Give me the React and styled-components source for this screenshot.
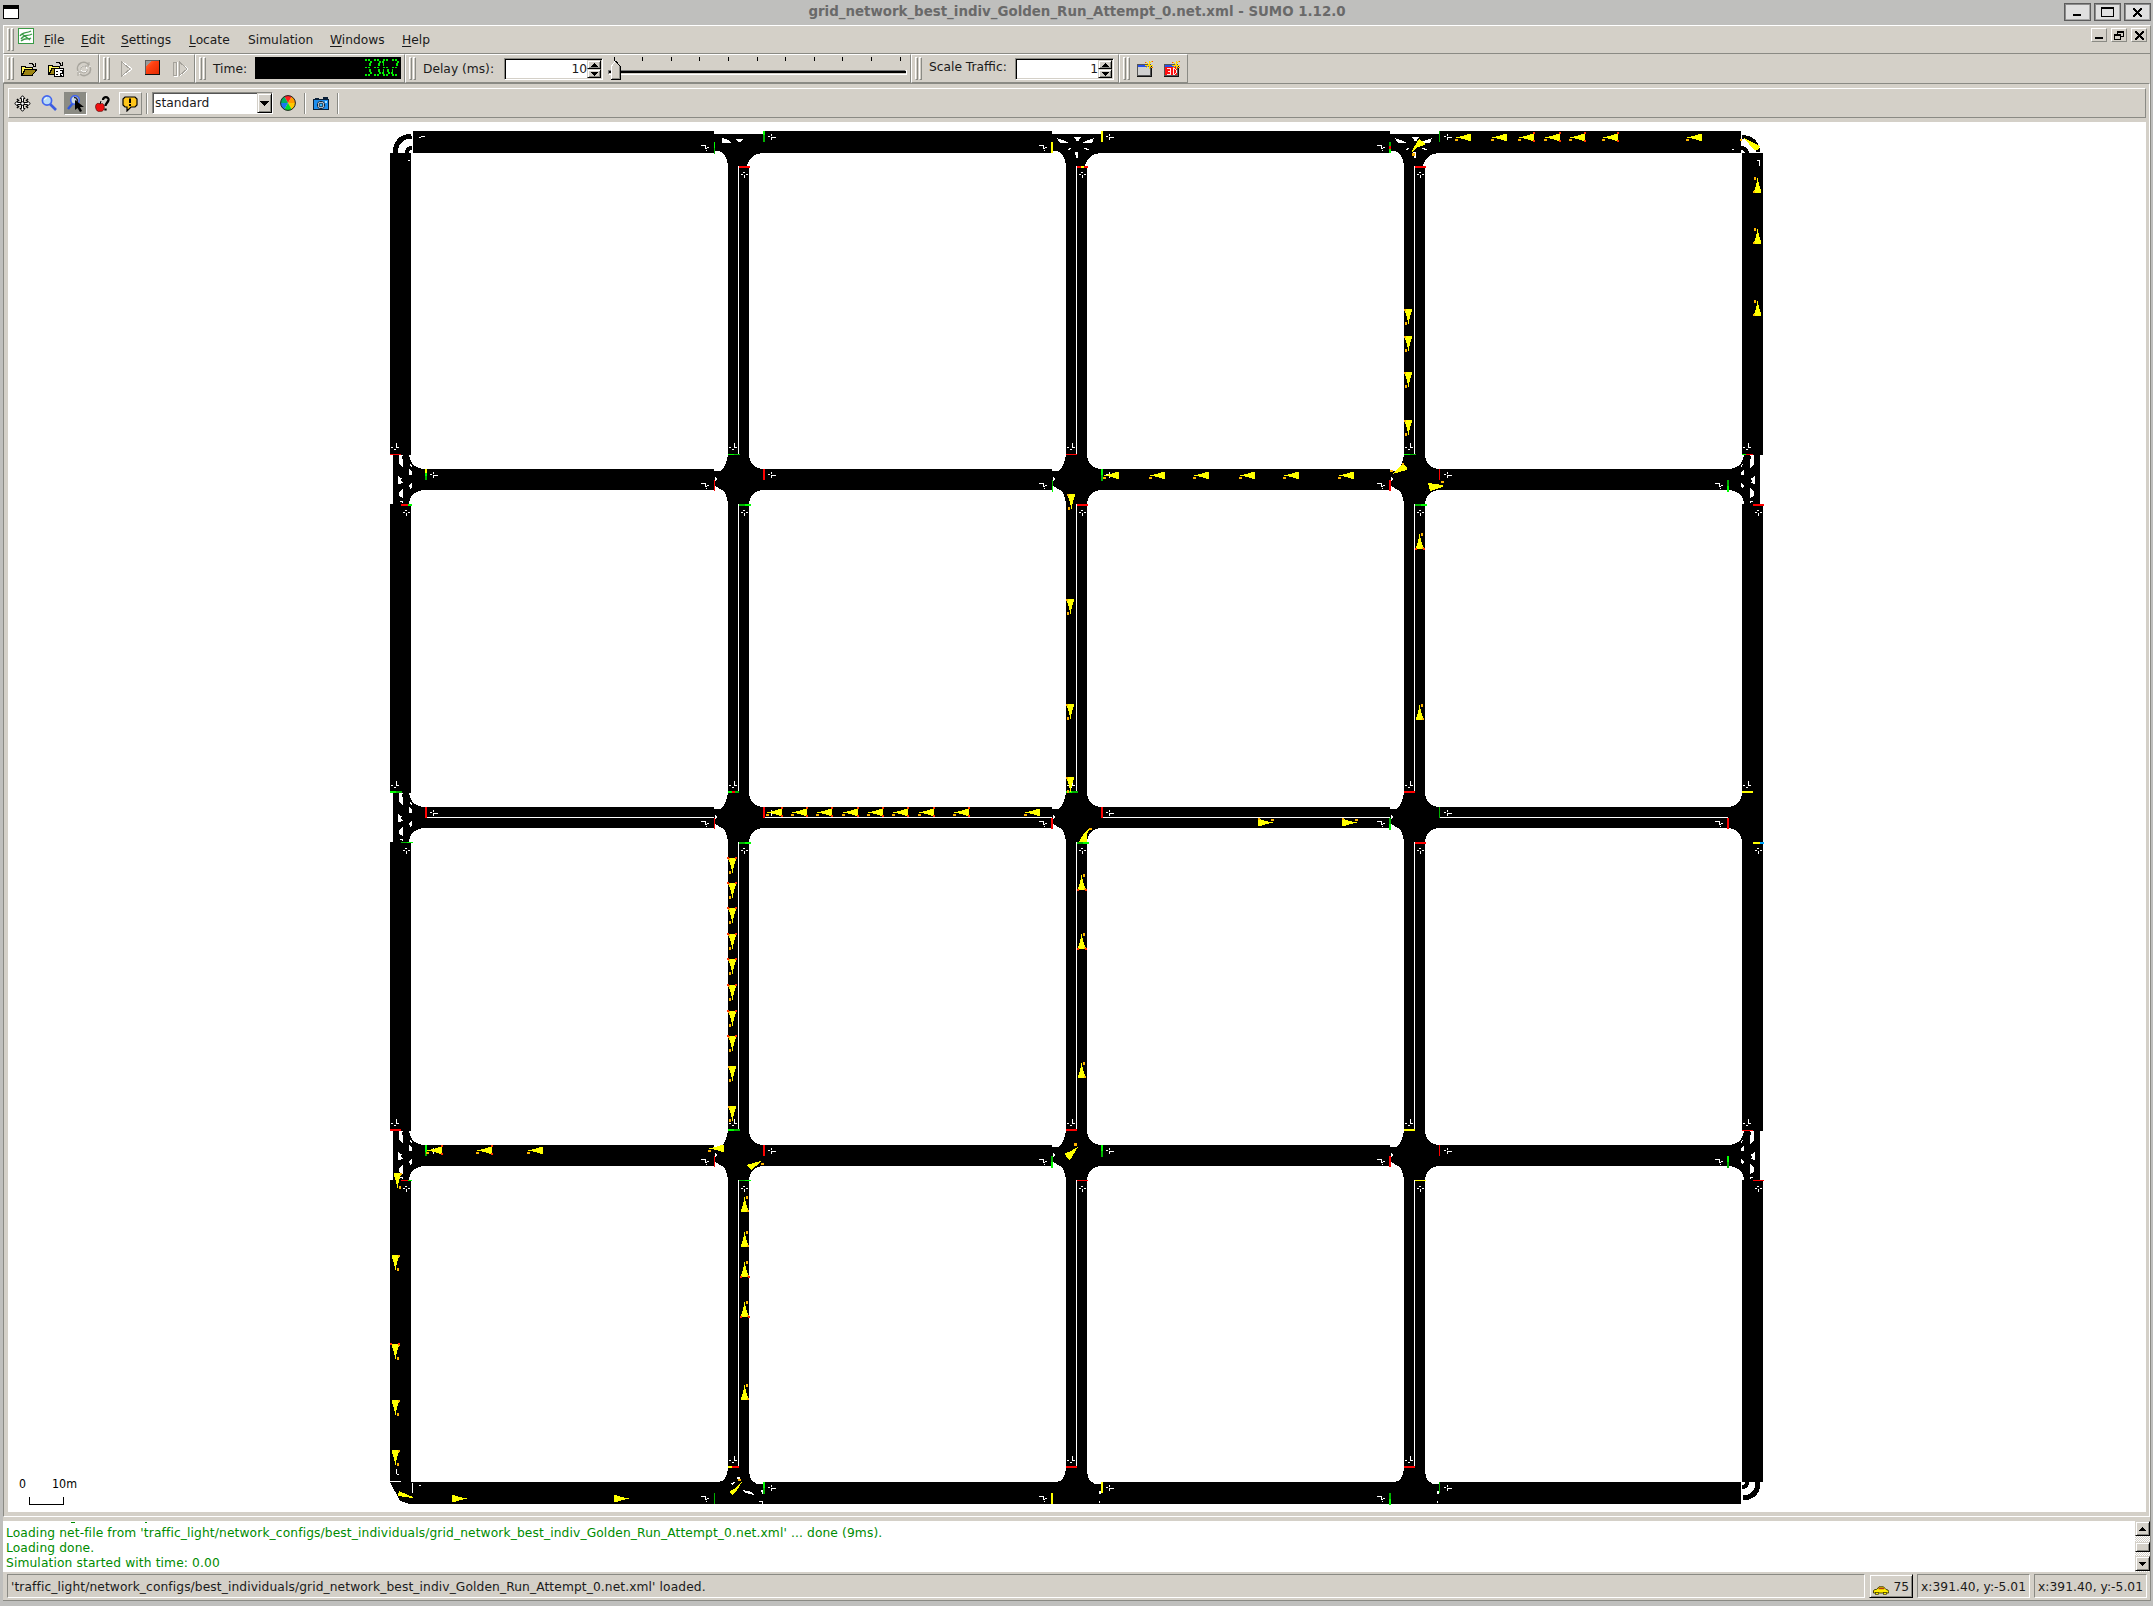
import React from "react";
import styled, { createGlobalStyle, css } from "styled-components";

const C = {
  face: "#d4d0c8",
  frame: "#bfbfbd",
  shadow: "#8a8a84",
  light: "#ffffff",
  ink: "#1a1a1a",
};

const Global = createGlobalStyle`
  html, body { margin: 0; padding: 0; background: ${C.frame}; }
  *, *::before, *::after { box-sizing: border-box; }
  body { font-family: "DejaVu Sans", sans-serif; font-size: 12.25px; color: ${C.ink}; overflow: hidden; }
`;

const raised = css`
  border: 1px solid;
  border-color: ${C.light} ${C.shadow} ${C.shadow} ${C.light};
`;
const hardRaised = css`
  border: 1px solid;
  border-color: ${C.face} #000 #000 ${C.face};
  box-shadow: inset 1px 1px 0 ${C.light}, inset -1px -1px 0 ${C.shadow};
`;
const sunken = css`
  border: 1px solid;
  border-color: ${C.shadow} ${C.light} ${C.light} ${C.shadow};
`;

const Screen = styled.div`
  width: 2153px;
  height: 1606px;
  display: flex;
  flex-direction: column;
  background: ${C.frame};
`;
const TitleBar = styled.header`
  height: 25px;
  padding: 3px 2px 0 3px;
  display: grid;
  grid-template-columns: 200px 1fr 200px;
  align-items: start;
`;
const Title = styled.h1`
  margin: 0;
  text-align: center;
  font-size: 13.38px;
  line-height: 17px;
  font-weight: bold;
  color: #696969;
  white-space: nowrap;
`;
const TitleButtons = styled.div`
  display: flex;
  gap: 3px;
  justify-content: flex-end;
`;
const TitleButton = styled.button`
  width: 27px;
  height: 18px;
  padding: 0;
  display: grid;
  place-items: center;
  background: #e0e0e0;
  border: 1px solid #5c5c5c;
  box-shadow: inset 1px 1px 0 #8b8b8b, inset -1px -1px 0 #a8a8a8;
`;
const WindowBody = styled.main`
  margin: 0 2px 0 3px;
  height: 1576px;
  display: flex;
  flex-direction: column;
  background: ${C.face};
  border-top: 1px solid ${C.light};
  border-bottom: 1px solid ${C.shadow};
  border-right: 1px solid ${C.shadow};
`;
const MenuBar = styled.nav`
  height: 28px;
  padding: 2px 3px 0 3px;
  display: flex;
  align-items: flex-start;
  border-bottom: 1px solid ${C.shadow};
  border-left: 1px solid ${C.light};
`;
const GripBox = styled.div`
  display: flex;
  gap: 1px;
  height: 23px;
  flex: none;
`;
const GripBar = styled.i`
  width: 3px;
  ${raised}
`;
const Grip = () => (
  <GripBox>
    <GripBar />
    <GripBar />
  </GripBox>
);
const MenuIcon = styled.div`
  width: 16px;
  height: 16px;
  margin: 0 10px 0 4px;
`;
const MenuItem = styled.div`
  width: ${(p) => p.$w}px;
  height: 20px;
  line-height: 24px;
  white-space: nowrap;
`;
const Key = styled.span`
  text-decoration: underline;
  text-underline-offset: 2px;
`;
const MdiButtons = styled.div`
  margin-left: auto;
  display: flex;
  gap: 4px;
`;
const MdiButton = styled.button`
  width: 16px;
  height: 14px;
  padding: 0;
  display: grid;
  place-items: center;
  background: ${C.face};
  ${raised}
`;
const ToolRow = styled.div`
  height: 29px;
  display: flex;
`;
const ToolGroup = styled.section`
  width: ${(p) => p.$w}px;
  padding: 2px 0 0 3px;
  display: flex;
  align-items: flex-start;
  ${raised}
`;
const ToolIcon = styled.div`
  width: ${(p) => p.$w || 16}px;
  height: 16px;
  margin-top: ${(p) => (p.$y === undefined ? 4 : p.$y)}px;
  margin-left: ${(p) => p.$l}px;
  flex: none;
`;
const ToolLabel = styled.label`
  width: ${(p) => p.$w}px;
  flex: none;
  margin-left: 7px;
  line-height: ${(p) => p.$lh || 24}px;
  white-space: nowrap;
`;
const Lcd = styled.div`
  width: 146px;
  height: 22px;
  padding: 2px 1px 0 0;
  display: flex;
  justify-content: flex-end;
  background: #000;
`;
const SpinField = styled.div`
  width: ${(p) => p.$w}px;
  flex: none;
  height: 22px;
  margin-top: 1px;
  display: flex;
  background: #fff;
  border: 1px solid;
  border-color: ${C.shadow} ${C.light} ${C.light} ${C.shadow};
  box-shadow: inset 1px 1px 0 #000, inset -1px -1px 0 ${C.face};
`;
const SpinValue = styled.span`
  flex: 1;
  text-align: right;
  line-height: 21px;
`;
const SpinButtons = styled.div`
  width: 15px;
  padding: 1px 1px 1px 0;
  display: grid;
  grid-template-rows: 1fr 1fr;
`;
const ArrowButton = styled.button`
  padding: 0;
  min-width: 0;
  min-height: 0;
  width: 100%;
  height: 100%;
  display: grid;
  place-items: center;
  background: ${C.face};
  ${hardRaised}
`;
const SliderBox = styled.div`
  width: 299px;
  height: 25px;
  margin-left: 5px;
  flex: none;
`;
const Mdi = styled.section`
  height: 1434px;
  padding: 4px 3px 0 4px;
  border-left: 1px solid ${C.shadow};
  border-right: 1px solid ${C.light};
  border-bottom: 1px solid ${C.light};
  border-top: 1px solid ${C.shadow};
`;
const ViewBar = styled.div`
  height: 30px;
  padding: 3px 0 0 5px;
  display: flex;
  align-items: flex-start;
  ${raised}
`;
const ViewButton = styled.div`
  width: 23px;
  height: 23px;
  margin-left: ${(p) => p.$l}px;
  display: grid;
  place-items: center;
  background: ${(p) => (p.$on ? "#8b8b83" : C.face)};
  ${(p) => (p.$on ? sunken : raised)}
`;
const Divider = styled.i`
  width: 2px;
  height: 21px;
  margin-top: 1px;
  margin-left: ${(p) => p.$l}px;
  background: linear-gradient(90deg, ${C.shadow} 50%, ${C.light} 50%);
`;
const Combo = styled.div`
  width: 121px;
  height: 22px;
  margin-left: 4px;
  display: flex;
  background: #fff;
  border: 1px solid;
  border-color: ${C.shadow} ${C.light} ${C.light} ${C.shadow};
  box-shadow: inset 1px 1px 0 #555;
`;
const ComboText = styled.span`
  flex: 1;
  padding-left: 2px;
  line-height: 21px;
`;
const ComboArrow = styled.div`
  width: 15px;
  display: grid;
`;
const Canvas = styled.div`
  height: 1390px;
  margin-top: 4px;
  background: #fff;
`;
const LogRow = styled.section`
  height: 51px;
  margin-top: 4px;
  display: flex;
  background: #fff;
`;
const LogText = styled.div`
  flex: 1;
  padding: 0 0 0 3px;
  color: #008b00;
  letter-spacing: 0.12px;
`;
const LogClip = styled.div`
  height: 3px;
`;
const LogLine = styled.div`
  height: 15px;
  line-height: 18px;
  white-space: nowrap;
`;
const ScrollBar = styled.div`
  width: 15px;
  height: 51px;
  display: grid;
  grid-template-rows: 15px 6px 10px 4px 15px;
  background: repeating-conic-gradient(#fff 0 25%, ${C.face} 0 50%) 0 0 / 2px 2px;
`;
const ScrollThumb = styled.i`
  background: ${C.face};
  ${hardRaised}
`;
const StatusBar = styled.footer`
  margin-top: 2px;
  padding: 0 3px 0 4px;
  display: flex;
  gap: 4px;
`;
const StatusCell = styled.div`
  width: ${(p) => p.$w}px;
  height: 24px;
  padding: 0 3px;
  line-height: 24px;
  letter-spacing: ${(p) => p.$ls || 0.05}px;
  white-space: nowrap;
  ${sunken}
`;
const VehicleButton = styled.div`
  width: 44px;
  height: 24px;
  padding: 0 3px;
  display: flex;
  justify-content: space-between;
  line-height: 24px;
  ${hardRaised}
`;
const CarSlot = styled.span`
  padding-top: 11px;
  display: flex;
`;

/* ---------- small drawings ---------- */

const Block = styled.svg`
  display: block;
`;
const TopIcon = styled.div`
  padding-top: 2px;
`;
const Svg = ({ w = 16, h = 16, children, ...rest }) => (
  <Block width={w} height={h} viewBox={`0 0 ${w} ${h}`} shapeRendering="crispEdges" {...rest}>
    {children}
  </Block>
);
const Tri = ({ down, s = 7 }) => (
  <Svg w={s} h={4}>
    <path d={down ? `M0 0H${s}L${s / 2} 4Z` : `M0 4H${s}L${s / 2} 0Z`} fill="#000" />
  </Svg>
);
const WindowGlyph = () => (
  <TopIcon>
    <Svg w={16} h={14}>
      <rect width="16" height="14" fill="#000" />
      <rect x="1" y="4" width="14" height="9" fill="#fff" />
    </Svg>
  </TopIcon>
);
const SumoIcon = () => (
  <Svg shapeRendering="auto">
    <rect x=".5" y=".5" width="15" height="15" fill="#fff" stroke="#3a9a46" />
    <path d="M2 8C5 3 8 6 13 3M3 11C7 5 9 9 14 6M3 13C8 9 10 12 13 10M4 6L12 12" stroke="#3a9a46" strokeWidth="1.4" fill="none" />
  </Svg>
);
const OpenIcon = () => (
  <Svg>
    <path d="M.5 5.500H4L5 6.500H11V9H4L1 14H.5Z" fill="#fff45c" stroke="#000" />
    <path d="M4 8.500H16L11 14.500H1Z" fill="#9c8412" stroke="#000" />
    <path d="M8 2.500H11L13 4.500M14.500 2V5H11.500" fill="none" stroke="#000" />
  </Svg>
);
const OpenConfigIcon = () => (
  <Svg>
    <path d="M.5 4.500H4L5 5.500H11V9H4L1 13H.5Z" fill="#fff45c" stroke="#000" />
    <path d="M4 7.500H15L11 13.500H1Z" fill="#9c8412" stroke="#000" />
    <path d="M8 1.500H11L13 3.500M14.500 1V4H11.500" fill="none" stroke="#000" />
    <rect x="6.500" y="7.500" width="9" height="8" fill="#fff" stroke="#000" />
    <path d="M8 10h2M8 13h2M12 9h2v3h-2v2h2" stroke="#000" fill="none" />
  </Svg>
);
const ReloadIcon = () => (
  <Svg shapeRendering="auto">
    <g fill="none" stroke="#fff" transform="translate(1 1)">
      <circle cx="7" cy="7" r="6.500" /><circle cx="7" cy="7" r="3" />
    </g>
    <g fill="none" stroke="#a9a69e">
      <path d="M2 10A6.300 6.300 0 0 1 13 4M14 6A6.300 6.300 0 0 1 4 13" strokeWidth="1.600" />
      <path d="M5 9A3 3 0 0 1 10 6M11 8A3 3 0 0 1 6 11M13 1V5H9M2 15V11H6" />
    </g>
  </Svg>
);
const PlayIcon = () => (
  <Svg>
    <path d="M4 1V15L13 8Z" fill="none" stroke="#fff" transform="translate(1 0)" />
    <path d="M3.500 1V15L12 8Z" fill={C.face} stroke="#a5a29b" />
  </Svg>
);
const StopIcon = () => (
  <Svg>
    <defs>
      <linearGradient id="stop" x1="0" y1="0" x2="1" y2="1">
        <stop offset="0" stopColor="#ff7a50" /><stop offset=".4" stopColor="#ff4010" /><stop offset="1" stopColor="#e02800" />
      </linearGradient>
    </defs>
    <rect x=".5" y=".5" width="14" height="14" fill="url(#stop)" stroke="#5d5d5d" />
    <path d="M1 6V1H6Z" fill="#9a9a9a" />
    <path d="M0 14.500H14.500V0" stroke="#111" fill="none" />
  </Svg>
);
const StepIcon = () => (
  <Svg>
    <path d="M2 1.500H5V15H2ZM8 1.500V15L16 8Z" fill="none" stroke="#fff" />
    <path d="M1.500 1V14.500H4.500V1ZM7.500 1V14.500L15 8Z" fill={C.face} stroke="#a5a29b" />
  </Svg>
);
/* each segment is a pair of blocks, as on a coarse LCD */
const SEGMENTS = {
  a: "M1 0H3V2H1ZM4 0H6V2H4Z",
  b: "M6 2H8V4H6ZM5 4H7V7H5Z",
  g: "M1 8H3V9H1ZM4 8H6V9H4Z",
  c: "M5 10H7V13H5ZM6 13H8V15H6Z",
  d: "M1 15H3V17H1ZM4 15H6V17H4Z",
  e: "M1 10H2V13H1ZM0 13H2V15H0Z",
  f: "M0 2H2V4H0ZM1 4H2V7H1Z",
};
const DIGITS = { 3: "abgcd", 6: "afgecd", 2: "abged" };
const LcdDigits = ({ value }) => (
  <Svg w={36} h={18}>
    {value.split("").map((n, i) => (
      <path key={i} transform={`translate(${i * 9} 0)`} fill="#00f000" d={DIGITS[n].split("").map((s) => SEGMENTS[s]).join("")} />
    ))}
  </Svg>
);
const Slider = () => (
  <Svg w={299} h={25}>
    {[6, 34, 63, 91, 120, 149, 177, 206, 234, 263, 292].map((x) => <rect key={x} x={x} y="0" width="1" height="4" fill="#000" />)}
    <path d="M.5 16.500V13.500H297" stroke="#777" fill="none" />
    <rect x="1" y="14" width="297" height="2" fill="#000" />
    <path d="M1 17.500H298.500V13" stroke="#fff" fill="none" />
    <path d="M3 22V9L7 4L12 9V22Z" fill={C.face} />
    <path d="M3.500 22V9L7 4.500" stroke="#fff" fill="none" />
    <path d="M7.500 4L12.500 9.500V22.500H3" stroke="#000" fill="none" />
    <path d="M11.500 9V21.500H4" stroke={C.shadow} fill="none" />
  </Svg>
);
const NewViewIcon = ({ threeD }) => (
  <Svg>
    <rect x=".5" y="3.500" width="13" height="11" fill={threeD ? "#ff1010" : "#d0d0d0"} stroke="#555" />
    <rect x="1" y="4" width="12" height="2" fill="#2850e8" />
    <path d="M0 15.500H14.500V5" stroke="#111" fill="none" />
    {threeD && <path d="M3 7.500H6.500V13H3M4 10H6M9 7.500H11L12 9V12L11 13H9Z" fill="none" stroke="#fff" strokeWidth=".9" />}
    <path d="M12 0V8M8 4H16M9 1L15 7M15 0L9 7" stroke="#ffd800" fill="none" />
    <path d="M15 0l1 1M8 1h1M15 6h1" stroke="#ff5000" />
  </Svg>
);
const MoveIcon = () => (
  <Svg w={17} h={17} shapeRendering="auto">
    <path d="M3 4L5 6M14 4L12 6M3 13L5 11M14 13L12 11" stroke="#000" strokeWidth="1.600" />
    <path d="M8.500 .7L11 3.500H9.500V7.500H13.500V6L16.300 8.500L13.500 11V9.500H9.500V13.500H11L8.500 16.300L6 13.500H7.500V9.500H3.500V11L.7 8.500L3.500 6V7.500H7.500V3.500H6Z" fill="#fff" stroke="#000" strokeWidth="1" />
    <circle cx="8.500" cy="8.500" r="1.800" fill="#fff" stroke="#000" />
  </Svg>
);
const ZoomIcon = () => (
  <Svg shapeRendering="auto">
    <path d="M9 9L15 15" stroke="#3c5ce0" strokeWidth="2.600" />
    <circle cx="6" cy="5.500" r="4.600" fill="#b9dcf8" stroke="#4265ee" strokeWidth="1.700" />
    <path d="M3.500 5A3 3 0 0 1 6 2.700" stroke="#fff" fill="none" />
  </Svg>
);
const ZoomPointerIcon = () => (
  <Svg w={18} h={17} shapeRendering="auto">
    <path d="M6 8L1 14" stroke="#3058e0" strokeWidth="2.400" />
    <circle cx="8" cy="5" r="4.300" fill="#cbd8e2" stroke="#4265ee" strokeWidth="1.600" />
    <path d="M7 2.500A3 3 0 0 1 9 8" stroke="#222" strokeWidth="1.600" fill="none" />
    <path d="M8 5V15L10.500 13L13 17L15 16L13 12H17Z" fill="#000" />
  </Svg>
);
const AppleIcon = () => (
  <Svg w={15} h={16} shapeRendering="auto">
    <path d="M5 8C2 6 0 9 .7 12C1.500 15 3 16 5 15.300C8 16 9.500 13 9.300 11C9 7 7 7 5 8Z" fill="#f01010" stroke="#400" strokeWidth=".6" />
    <path d="M5 8L6 5" stroke="#000" />
    <path d="M8 4C8 0 14 .5 13.500 4C13 7 10.500 7 10.500 10M10.500 12.500V14.500" fill="none" stroke="#000" strokeWidth="2.300" />
  </Svg>
);
const TooltipIcon = () => (
  <Svg w={17} h={16} shapeRendering="auto">
    <path d="M3 1H13L15 3V9L13 11H9L5 15V11H3L1 9V3Z" fill="#ffc61a" stroke="#000" strokeWidth="1.200" />
    <rect x="7" y="2.500" width="2" height="4.500" fill="#000" /><rect x="7" y="8" width="2" height="2" fill="#000" />
  </Svg>
);
const WHEEL = ["#ff2020", "#ff9a00", "#ffc800", "#00e028", "#1878f0", "#00b060"];
const WheelIcon = () => {
  const pt = (a) => `${8 + 7.4 * Math.sin(a)} ${8 - 7.4 * Math.cos(a)}`;
  return (
    <Svg shapeRendering="auto">
      {WHEEL.map((c, i) => {
        const a = ((i - 0.5) * Math.PI) / 3;
        return <path key={c} d={`M8 8L${pt(a)}A7.400 7.400 0 0 1 ${pt(a + Math.PI / 3)}Z`} fill={c} />;
      })}
      <circle cx="8" cy="8" r="7.400" fill="none" stroke="#222" strokeWidth="1" />
    </Svg>
  );
};
const CameraIcon = () => (
  <Svg>
    <rect x=".5" y="3.500" width="15" height="10" fill="#1e8ff0" stroke="#0a2038" />
    <rect x="10" y="1" width="5" height="3" fill="#0a2038" /><rect x="2" y="2" width="4" height="2" fill="#0a2038" />
    <circle cx="8" cy="9" r="3.700" fill="#fff" stroke="#0a2038" shapeRendering="auto" />
    <circle cx="8" cy="9" r="2" fill="#35b8ff" stroke="#0a2038" shapeRendering="auto" />
    <rect x="12" y="5" width="2" height="2" fill="#a5e0ff" />
  </Svg>
);
const CarIcon = () => (
  <Svg w={16} h={9} shapeRendering="auto">
    <path d="M.5 4.500L2 3.500H3.500L6 .8H10.500L13 3.500L15 4L15.600 5.500V7H.5Z" fill="#ffee00" stroke="#3a3500" strokeWidth=".9" />
    <path d="M5.500 2.500H11" stroke="#b43c10" strokeWidth="1.500" />
    <rect x="2.500" y="6.500" width="3" height="2" fill="#ffee00" stroke="#3a3500" strokeWidth=".7" /><rect x="10.500" y="6.500" width="3" height="2" fill="#ffee00" stroke="#3a3500" strokeWidth=".7" />
  </Svg>
);
const Minimize = () => <Svg w={9} h={8}><rect y="6" width="8" height="2" fill="#000" /></Svg>;
const Cross = ({ s = 9 }) => <Svg w={s} h={s}><path d={`M0 0L${s} ${s}M${s} 0L0 ${s}`} stroke="#000" strokeWidth="2" /></Svg>;

/* ---------- road network ---------- */

const COLS = [390, 728, 1066, 1404, 1742];
const ROWS = [131, 469, 807, 1145, 1482];
const G = "#00ff00", D = "#00b300", R = "#ff0000", Y = "#ffff00", B = "#00a8ff", O = "#ffb400";

/* approach lamps: [column, row, side, colours, thickness] */
const SIGNALS = [
  [1, 0, "W", [G, D], 1], [1, 0, "E", [G, D, D], 2], [1, 0, "S", [R], 2],
  [2, 0, "W", [Y], 2], [2, 0, "E", [Y], 2], [2, 0, "S", [R, Y, R], 2],
  [3, 0, "W", [D, R, G], 2], [3, 0, "E", [D], 1], [3, 0, "S", [R], 2],
  [0, 1, "N", [R], 1], [0, 1, "E", [Y, G, D], 2], [0, 1, "S", [R, R, G], 2],
  [1, 1, "N", [G, D], 1], [1, 1, "W", [R], 1], [1, 1, "E", [R], 2], [1, 1, "S", [D, G], 2],
  [2, 1, "N", [R], 1], [2, 1, "W", [D, G], 1], [2, 1, "E", [G, D], 2], [2, 1, "S", [R], 2],
  [3, 1, "N", [G, D], 1], [3, 1, "W", [R], 2], [3, 1, "E", [R], 1], [3, 1, "S", [D, G], 2],
  [4, 1, "N", [G, R, R], 1], [4, 1, "W", [D, G], 2], [4, 1, "S", [R], 2],
  [0, 2, "N", [G, D], 2], [0, 2, "E", [R], 2], [0, 2, "S", [D, G], 1],
  [1, 2, "N", [G, R, D], 2], [1, 2, "W", [R], 1], [1, 2, "E", [R], 2], [1, 2, "S", [D, G], 2],
  [2, 2, "N", [G, D], 2], [2, 2, "W", [R], 2], [2, 2, "E", [R], 2], [2, 2, "S", [D, G], 2],
  [3, 2, "N", [R], 2], [3, 2, "W", [D, G], 2], [3, 2, "E", [D], 1], [3, 2, "S", [R], 2],
  [4, 2, "N", [Y], 2], [4, 2, "W", [R], 2], [4, 2, "S", [Y, Y, B], 2],
  [0, 3, "N", [R], 2], [0, 3, "E", [G, G, D], 2], [0, 3, "S", [R, R, G], 1],
  [1, 3, "N", [G, D], 2], [1, 3, "W", [R], 1], [1, 3, "E", [R], 2], [1, 3, "S", [D, G], 1],
  [2, 3, "N", [R], 2], [2, 3, "W", [D, G], 2], [2, 3, "E", [G, D], 2], [2, 3, "S", [R], 1],
  [3, 3, "N", [Y], 2], [3, 3, "W", [R], 2], [3, 3, "E", [R], 1], [3, 3, "S", [Y], 1],
  [4, 3, "N", [R], 1], [4, 3, "W", [G, D], 2], [4, 3, "S", [R], 1],
  [1, 4, "N", [Y, R, R], 2], [1, 4, "W", [D], 1], [1, 4, "E", [G, D], 2],
  [2, 4, "N", [R], 2], [2, 4, "W", [Y], 2], [2, 4, "E", [Y], 2],
  [3, 4, "N", [R], 2], [3, 4, "W", [D, G], 2], [3, 4, "E", [D], 1],
];

/* turn markings painted at the end of each lane, as 1px blocks */
const ARROWS = {
  N: "M6-10H7V-5H6ZM1-6H3V-5H1ZM7-6H9V-5H7ZM4-4H6V-3H4Z",
  S: "M4 5H6V6H4ZM2 7H4V8H2ZM5 8H6V11H5ZM7 7H9V8H7Z",
  W: "M-13 3H-8V4H-13ZM-9 4H-8V6H-9ZM-9 6H-7V7H-9ZM-7 5H-5V6H-7ZM-8 8H-7V9H-8Z",
  E: "M4 5H6V6H4ZM7 3H8V5H7ZM7 6H8V9H7ZM8 6H12V7H8Z",
};

const Signal = ({ c, r, side, colors, t }) => {
  const x = COLS[c], y = ROWS[r];
  const vertical = side === "W" || side === "E";
  const bx = side === "W" ? x - 13 - t : side === "E" ? x + 35 : side === "N" ? x : x + 11;
  const by = side === "N" ? y - 14 - t : side === "S" ? y + 35 : side === "E" ? y : y + 11;
  const n = colors.length, step = 11 / n;
  const ax = side === "W" ? x - 14 : side === "E" ? x + 36 : side === "N" ? x : x + 11;
  const ay = side === "N" ? y - 16 : side === "S" ? y + 36 : side === "E" ? y : y + 11;
  return (
    <g>
      {colors.map((col, i) => (
        <rect key={i} fill={col}
          x={vertical ? bx : Math.round(bx + i * step)} y={vertical ? Math.round(by + i * step) : by}
          width={vertical ? t : Math.ceil(step)} height={vertical ? Math.ceil(step) : t} />
      ))}
      <path transform={`translate(${ax} ${ay})`} d={ARROWS[side]} fill="#fff" />
    </g>
  );
};

/* vehicles: [heading, x, y, braking, blinker side] measured from the top left of the body */
const VEHICLES = [
  ...[1456, 1492].map((x) => ["w", x, 134, 0, 1]),
  ...[1519, 1545, 1570, 1603].map((x) => ["w", x, 134, 1, 1]), ["w", 1687, 134, 0, 1],
  ...[178, 229, 301].map((y) => ["n", 1754, y, 0, -1]),
  ...[308, 335, 371, 419].map((y) => ["s", 1405, y, 0, -1]),
  ...[1104, 1150, 1194, 1240, 1284, 1339].map((x) => ["w", x, 472, 0, 1]),
  ["s", 1068, 493, 0, -1], ["s", 1067, 598, 0, -1], ["s", 1067, 703, 0, -1], ["s", 1067, 776, 0, -1],
  ["n", 1416, 534, 1, 1], ["n", 1416, 705, 0, 1],
  ...[767, 792, 817, 843, 868, 893, 919, 954].map((x) => ["w", x, 809, 1, 1]), ["w", 1025, 809, 0, 1],
  ["e", 1257, 820, 0, 1], ["e", 1341, 820, 0, 1],
  ["n", 1078, 875, 1, 1], ["n", 1078, 934, 1, 1], ["n", 1078, 1063, 0, 1],
  ...[857, 882, 907, 933, 958, 984, 1010, 1035].map((y) => ["s", 729, y, 1, -1]),
  ["s", 729, 1065, 0, -1], ["s", 729, 1105, 0, -1],
  ["w", 427, 1147, 1, 1], ["w", 477, 1147, 1, 1], ["w", 528, 1147, 0, 1], ["w", 709, 1145, 0, 1],
  ["s", 394, 1172, 0, 1], ["s", 392, 1254, 0, 1], ["s", 392, 1343, 1, 1], ["s", 392, 1399, 0, 1], ["s", 392, 1449, 0, 1],
  ["n", 741, 1197, 0, 1], ["n", 741, 1232, 0, 1], ["n", 741, 1262, 1, 1], ["n", 741, 1302, 1, 1], ["n", 741, 1385, 0, 1],
  ["e", 451, 1496, 0, 0], ["e", 613, 1496, 0, 0],
];

const Vehicle = ({ dir, x, y, brake, blink }) => {
  const place = {
    w: "",
    e: "translate(16 6) rotate(180)",
    s: "translate(0 16) rotate(-90)",
    n: "translate(7 0) rotate(90)",
  }[dir];
  const low = dir === "n" ? blink < 0 : blink > 0;
  return (
    <g transform={`translate(${x} ${y}) ${place}`}>
      <path d="M0 3H4V2H8V1H11V0H15V7H12V6H9V5H5V4H0Z" fill={Y} />
      {blink !== 0 && <rect x="-1" y={low ? 5 : 0} width="3" height="2" fill={O} />}
      {blink !== 0 && dir !== "w" && <rect x="13" y={low ? 6 : -1} width="2" height="2" fill={O} />}
      {brake ? <path d="M14 -2H16V0H14ZM14 6H16V8H14Z" fill="#ff3300" /> : null}
    </g>
  );
};

const CROSS = "M0-15H21Q22-1 35 0V21Q22 22 21 35H0Q-1 22-8 20L-14 16V2H-7Q-1-4 0-15Z";
const T_TOP = "M-14 3H35V22Q22 23 19 35H0Q-1 23-9 20H-14Z";
const T_TOP_HOLES = "M-9 7L-1 10L3 12H-6ZM7 6H16L13 8V10H10V8ZM28 7L20 10L16 12H26ZM9 21H12V27H10ZM0 18L6 17L3 19ZM17 17L24 18L21 19Z";
const T_LEFT = "M3-15H19Q20-1 35 0V21Q20 22 19 35H3Z";
const T_LEFT_HOLES = "M9-14H13L12-12L13-8V-1L9-5ZM8 6L10 9H12L11 12L13 14L8 15ZM9 23L13 19V29L9 27ZM9 32H13V34ZM19 0L22 3V6H19ZM19 16L22 14V18L20 20ZM20-6L22-3L21-1Z";
const T_BOTTOM = "M0-14H21Q21-2 26 0L29 2H35V22H-14V0H-9Q-1-1 0-14Z";

const Network = () => (
  <Block width="2138" height="1390" viewBox="8 122 2138 1390" shapeRendering="crispEdges">
    {ROWS.map((y, r) =>
      COLS.slice(0, 4).map((x, c) => (
        <g key={`${r}${c}`}>
          <rect
            x={c === 0 && (r === 0 || r === 4) ? x + 23 : x + 35} y={y}
            width={(c === 0 && (r === 0 || r === 4) ? 301 : 289) + (c === 3 && (r === 0 || r === 4) ? 13 : 0)}
            height={r === 0 || r === 4 ? 22 : 21}
          />
          {r === 2 && <rect x={x + 35} y={y + 10} width="289" height="1" fill="#fff" />}
        </g>
      ))
    )}
    {COLS.map((x, c) =>
      ROWS.slice(0, 4).map((y, r) => {
        const side = c === 0 || c === 4;
        const top = side && r === 0 ? y + 22 : y + 35;
        const bottom = side && r === 3 ? 1482 : ROWS[r + 1] - 14;
        return (
          <g key={`${c}${r}`}>
            <rect x={x} y={top} width="21" height={bottom - top} />
            {!side && <rect x={x + 10} y={top} width="1" height={bottom - top} fill="#fff" />}
          </g>
        );
      })
    )}
    {[1, 2, 3].map((c) => (
      <g key={c}>
        <g transform={`translate(${COLS[c]} ${ROWS[0]})`}>
          <path d={T_TOP} />
          <path d={c === 1 ? "M-6 7L0 9L4 12H-6ZM7 8H16L13 10V11H10Z" : T_TOP_HOLES} fill="#fff" />
        </g>
        {[1, 2, 3].map((r) => (
          <g key={r} transform={`translate(${COLS[c]} ${ROWS[r]})`}>
            <path d={CROSS} />
            <path d="M-13 8L-11 10L-13 12Z" fill="#fff" />
          </g>
        ))}
        <g transform={`translate(${COLS[c]} ${ROWS[4]})`}>
          <path d={T_BOTTOM} />
          <path d={c === 1 ? "M9-5H12V0L10-2ZM14 8L24 10L26 13L18 11ZM3 1L7 0L4 3ZM31 19H35V22H34V20H31ZM33 8H35V12H34Z" : "M33 9H35V12H33ZM33 19H34V21H33Z"} fill="#fff" />
        </g>
      </g>
    ))}
    {[1, 2, 3].map((r) => (
      <g key={r}>
        <g transform={`translate(${COLS[0]} ${ROWS[r]})`}>
          <path d={T_LEFT} />
          <path d={T_LEFT_HOLES} fill="#fff" />
        </g>
        <g transform={`translate(${COLS[4] + 21} ${ROWS[r]}) scale(-1 1)`}>
          <path d={r === 2 ? "M0-15H21Q22-1 35 0V21Q22 22 21 35H0Z" : T_LEFT} />
          {r !== 2 && <path d={T_LEFT_HOLES} fill="#fff" />}
        </g>
      </g>
    ))}
    {/* rounded corners */}
    <g fill="none" stroke="#000">
      <path d="M411.500 136Q396 137 395 153" strokeWidth="5" />
      <path d="M412 148Q407 148 407 153" strokeWidth="4" />
      <path d="M1742 137Q1757 138 1758 152" strokeWidth="4" />
      <path d="M1741 148Q1746 148 1747 153" strokeWidth="4" />
      <path d="M1758 1482Q1758 1497 1743 1498" strokeWidth="5" />
      <path d="M1747 1482Q1747 1487 1742 1487" strokeWidth="4" />
    </g>
    <path d="M390 1482H414V1504H410L400 1501Z" />
    <path d="M390 1481.500H401M412.500 1483V1493" stroke="#fff" />
    <path d="M419 137.500H421M421 136.500H425M408 160.500H410M1732 149.500H1734M1757 160.500H1760M1759.500 160V166M396.500 1469V1474M397 1474.500H399M419 1485.500H421" stroke="#fff" />
    {SIGNALS.map(([c, r, side, colors, t]) => (
      <Signal key={`${c}${r}${side}`} c={c} r={r} side={side} colors={colors} t={t} />
    ))}
    {VEHICLES.map(([dir, x, y, brake, blink]) => (
      <Vehicle key={`${x}-${y}`} dir={dir} x={x} y={y} brake={brake} blink={blink} />
    ))}
    <g fill={Y}>
      <path d="M1744 138L1760 146L1758 150H1754Z" />
      <path d="M1412 152L1413 149L1419 139L1425 143V145L1418 147Z" />
      <path d="M1392 474L1403 464L1407 468V470Z" />
      <path d="M1428 483L1443 485V487L1430 491Z" />
      <path d="M1079 842H1087V834L1090 828L1084 833Z" />
      <path d="M746 1165L761 1161V1162L751 1170Z" />
      <path d="M1065 1153L1069 1152L1078 1147L1070 1160L1066 1157Z" />
      <path d="M399 1491L413 1497V1498L398 1496Z" />
      <path d="M729 1492L734 1489L742 1482L737 1490L733 1495Z" />
    </g>
    <path d="M1740 139h2v2h-2zM1412 153h3v3h-3zM1390 470h3v2h-3zM1402 463h2v2h-2zM1441 481h3v2h-3zM1089 828h3v2h-3zM761 1163h3v2h-3zM1074 1143h3v3h-3zM738 1479h3v2h-3z" fill={O} />
    {/* distance scale */}
    <path d="M29.500 1497V1504.500H63.500V1497" stroke="#000" fill="none" />
    <g fontFamily='"DejaVu Sans", sans-serif' fontSize="11.500" fill="#000">
      <text x="19" y="1488" textLength="7" lengthAdjust="spacingAndGlyphs">0</text>
      <text x="52" y="1488" textLength="25" lengthAdjust="spacingAndGlyphs">10m</text>
    </g>
  </Block>
);

const MENUS = [["F", "ile", 37], ["E", "dit", 40], ["S", "ettings", 68], ["L", "ocate", 59], ["", "Simulation", 82], ["W", "indows", 72], ["H", "elp", 40]];

const Spin = ({ value, w }) => (
  <SpinField $w={w}>
    <SpinValue>{value}</SpinValue>
    <SpinButtons>
      <ArrowButton><Tri /></ArrowButton>
      <ArrowButton><Tri down /></ArrowButton>
    </SpinButtons>
  </SpinField>
);

export default function App() {
  return (
    <Screen>
      <Global />
      <TitleBar>
        <WindowGlyph />
        <Title>grid_network_best_indiv_Golden_Run_Attempt_0.net.xml - SUMO 1.12.0</Title>
        <TitleButtons>
          <TitleButton><Minimize /></TitleButton>
          <TitleButton><Svg w={13} h={10}><rect x=".5" y=".5" width="12" height="9" fill="none" stroke="#000" /><rect width="13" height="2" /></Svg></TitleButton>
          <TitleButton><Cross s={9} /></TitleButton>
        </TitleButtons>
      </TitleBar>
      <WindowBody>
        <MenuBar>
          <Grip />
          <MenuIcon><SumoIcon /></MenuIcon>
          {MENUS.map(([key, rest, w]) => (
            <MenuItem key={rest} $w={w}>{key && <Key>{key}</Key>}{rest}</MenuItem>
          ))}
          <MdiButtons>
            <MdiButton><Minimize /></MdiButton>
            <MdiButton>
              <Svg w={10} h={9}><path d="M3.500 4V.5H9.500V5.500H7M.5 3.500H6.500V8.500H.5ZM3 1.500H10M0 4.500H7" fill="none" stroke="#000" /></Svg>
            </MdiButton>
            <MdiButton><Cross s={9} /></MdiButton>
          </MdiButtons>
        </MenuBar>
        <ToolRow>
          <ToolGroup $w={96}>
            <Grip />
            <ToolIcon $l={7}><OpenIcon /></ToolIcon>
            <ToolIcon $l={11}><OpenConfigIcon /></ToolIcon>
            <ToolIcon $l={12}><ReloadIcon /></ToolIcon>
          </ToolGroup>
          <ToolGroup $w={96}>
            <Grip />
            <ToolIcon $l={8}><PlayIcon /></ToolIcon>
            <ToolIcon $l={11} $y={3}><StopIcon /></ToolIcon>
            <ToolIcon $l={11}><StepIcon /></ToolIcon>
          </ToolGroup>
          <ToolGroup $w={210}>
            <Grip />
            <ToolLabel $w={42}>Time:</ToolLabel>
            <Lcd><LcdDigits value="3362" /></Lcd>
          </ToolGroup>
          <ToolGroup $w={506}>
            <Grip />
            <ToolLabel $w={81}>Delay (ms):</ToolLabel>
            <Spin value="10" w={99} />
            <SliderBox><Slider /></SliderBox>
          </ToolGroup>
          <ToolGroup $w={208}>
            <Grip />
            <ToolLabel $w={86} $lh={20}>Scale Traffic:</ToolLabel>
            <Spin value="1" w={99} />
          </ToolGroup>
          <ToolGroup $w={69}>
            <Grip />
            <ToolIcon $l={7}><NewViewIcon /></ToolIcon>
            <ToolIcon $l={11}><NewViewIcon threeD /></ToolIcon>
          </ToolGroup>
        </ToolRow>
        <Mdi>
          <ViewBar>
            <ToolIcon $l={0} $w={17} $y={3}><MoveIcon /></ToolIcon>
            <ToolIcon $l={10} $y={3}><ZoomIcon /></ToolIcon>
            <ViewButton $l={7} $on><ZoomPointerIcon /></ViewButton>
            <ToolIcon $l={8} $w={15}><AppleIcon /></ToolIcon>
            <ViewButton $l={9}><TooltipIcon /></ViewButton>
            <Divider $l={4} />
            <Combo>
              <ComboText>standard</ComboText>
              <ComboArrow><ArrowButton><Svg w={9} h={5}><path d="M0 0H9L4.500 5Z" /></Svg></ArrowButton></ComboArrow>
            </Combo>
            <ToolIcon $l={7} $y={3}><WheelIcon /></ToolIcon>
            <Divider $l={8} />
            <ToolIcon $l={7} $y={4}><CameraIcon /></ToolIcon>
            <Divider $l={8} />
          </ViewBar>
          <Canvas><Network /></Canvas>
        </Mdi>
        <LogRow>
          <LogText>
            <LogClip><Svg w={160} h={3}><path d="M65 1.500H69M139 1.500H141" stroke="#008b00" /></Svg></LogClip>
            <LogLine>Loading net-file from 'traffic_light/network_configs/best_individuals/grid_network_best_indiv_Golden_Run_Attempt_0.net.xml' ... done (9ms).</LogLine>
            <LogLine>Loading done.</LogLine>
            <LogLine>Simulation started with time: 0.00</LogLine>
          </LogText>
          <ScrollBar>
            <ArrowButton><Tri /></ArrowButton>
            <i />
            <ScrollThumb />
            <i />
            <ArrowButton><Tri down /></ArrowButton>
          </ScrollBar>
        </LogRow>
        <StatusBar>
          <StatusCell $w={1858} $ls={0.1}>'traffic_light/network_configs/best_individuals/grid_network_best_indiv_Golden_Run_Attempt_0.net.xml' loaded.</StatusCell>
          <VehicleButton><CarSlot><CarIcon /></CarSlot>75</VehicleButton>
          <StatusCell $w={113}>x:391.40, y:-5.01</StatusCell>
          <StatusCell $w={113}>x:391.40, y:-5.01</StatusCell>
        </StatusBar>
      </WindowBody>
    </Screen>
  );
}
